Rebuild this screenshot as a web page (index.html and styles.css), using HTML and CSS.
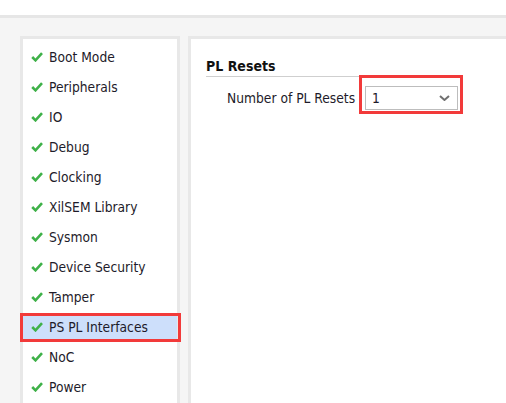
FILE: index.html
```html
<!DOCTYPE html>
<html>
<head>
<meta charset="utf-8">
<link rel="stylesheet" href="styles.css">
</head>
<body>
<div class="topbar"></div>
<div class="main">
  <nav class="sidebar">
    <div class="item"><svg class="check" viewBox="0 0 12 10"><polyline points="1.2,5 4.5,8.3 11,1.2"/></svg><span>Boot Mode</span></div>
    <div class="item"><svg class="check" viewBox="0 0 12 10"><polyline points="1.2,5 4.5,8.3 11,1.2"/></svg><span>Peripherals</span></div>
    <div class="item"><svg class="check" viewBox="0 0 12 10"><polyline points="1.2,5 4.5,8.3 11,1.2"/></svg><span>IO</span></div>
    <div class="item"><svg class="check" viewBox="0 0 12 10"><polyline points="1.2,5 4.5,8.3 11,1.2"/></svg><span>Debug</span></div>
    <div class="item"><svg class="check" viewBox="0 0 12 10"><polyline points="1.2,5 4.5,8.3 11,1.2"/></svg><span>Clocking</span></div>
    <div class="item"><svg class="check" viewBox="0 0 12 10"><polyline points="1.2,5 4.5,8.3 11,1.2"/></svg><span>XilSEM Library</span></div>
    <div class="item"><svg class="check" viewBox="0 0 12 10"><polyline points="1.2,5 4.5,8.3 11,1.2"/></svg><span>Sysmon</span></div>
    <div class="item"><svg class="check" viewBox="0 0 12 10"><polyline points="1.2,5 4.5,8.3 11,1.2"/></svg><span>Device Security</span></div>
    <div class="item"><svg class="check" viewBox="0 0 12 10"><polyline points="1.2,5 4.5,8.3 11,1.2"/></svg><span>Tamper</span></div>
    <div class="item selected"><svg class="check" viewBox="0 0 12 10"><polyline points="1.2,5 4.5,8.3 11,1.2"/></svg><span>PS PL Interfaces</span></div>
    <div class="item"><svg class="check" viewBox="0 0 12 10"><polyline points="1.2,5 4.5,8.3 11,1.2"/></svg><span>NoC</span></div>
    <div class="item"><svg class="check" viewBox="0 0 12 10"><polyline points="1.2,5 4.5,8.3 11,1.2"/></svg><span>Power</span></div>
  </nav>
  <section class="content">
    <h2 class="title">PL Resets</h2>
    <div class="field">
      <label class="label">Number of PL Resets</label>
      <div class="select">
        <span class="value">1</span>
        <svg class="chev" viewBox="0 0 11 6"><polyline points="1,1 5.5,5 10,1"/></svg>
      </div>
    </div>
  </section>
</div>
</body>
</html>
```

FILE: styles.css
```css
html, body {
  margin: 0;
  padding: 0;
  height: 100%;
  overflow: hidden;
}
body {
  background: #f5f5f5;
  font-family: "DejaVu Sans Condensed", "DejaVu Sans", sans-serif;
  font-size: 13.7px;
  color: #1e1b2a;
}
.topbar {
  height: 15px;
  background: #ffffff;
  border-bottom: 3px solid #e6e6e6;
}
.main {
  display: flex;
  gap: 8px;
  padding: 18px 0 0 20px;
  height: 367px;
  overflow: hidden;
}
.sidebar {
  box-sizing: border-box;
  width: 160px;
  flex: none;
  background: #fff;
  border: 3px solid #e8e8e8;
  border-bottom: none;
  padding-top: 3px;
}
.item {
  position: relative;
  height: 30px;
  display: flex;
  align-items: center;
  gap: 6px;
  padding-left: 8px;
}
.check {
  width: 12px;
  height: 10px;
  flex: none;
}
.check polyline {
  fill: none;
  stroke: #3fb149;
  stroke-width: 2.6;
}
.selected {
  background: linear-gradient(to bottom, transparent 1px, #cddffb 1px);
}
.selected::after {
  content: "";
  position: absolute;
  left: -3px;
  right: -4px;
  top: 1px;
  bottom: 0;
  border: 3px solid #f23a3a;
}
.content {
  box-sizing: border-box;
  width: 340px;
  flex: none;
  background: #fff;
  border: 3px solid #e8e8e8;
  border-bottom: none;
  padding: 19px 0 0 15px;
}
.title {
  margin: 0;
  width: 230px;
  font-size: 14px;
  font-weight: bold;
  line-height: 17px;
  color: #111;
  border-bottom: 1px solid #cfcfcf;
  padding-bottom: 1px;
}
.field {
  display: flex;
  align-items: center;
  gap: 10px;
  padding-left: 21px;
  margin-top: 9px;
}
.select {
  position: relative;
  box-sizing: border-box;
  width: 93px;
  height: 24px;
  border: 1px solid #bdbdbd;
  display: flex;
  align-items: center;
  justify-content: space-between;
  padding: 0 7px 0 6px;
}
.select::after {
  content: "";
  position: absolute;
  left: -7px;
  right: -6px;
  top: -12px;
  bottom: -5px;
  border: 3px solid #f23a3a;
}
.chev {
  width: 11px;
  height: 6px;
}
.chev polyline {
  fill: none;
  stroke: #707070;
  stroke-width: 2;
}
```
